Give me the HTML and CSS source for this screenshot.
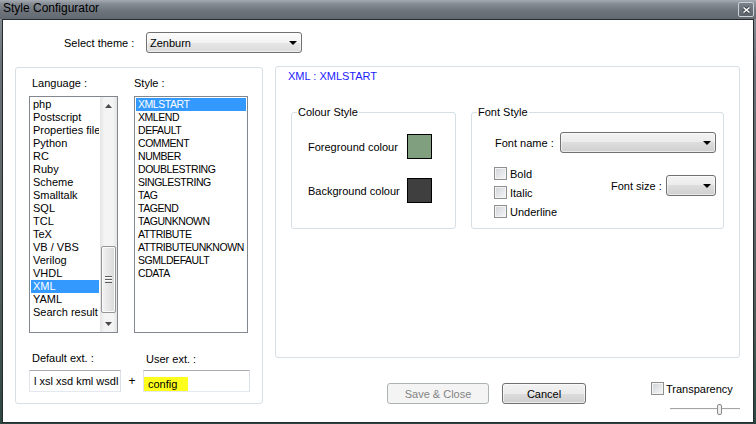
FILE: index.html
```html
<!DOCTYPE html>
<html lang="en">
<head>
  <meta charset="UTF-8">
  <meta name="viewport" content="width=device-width, initial-scale=1.0">
  <title>Style Configurator</title>
  <link rel="stylesheet" href="styles.css">
</head>
<body>
  <div class="window">
    <div class="titlebar">
      <span class="title">Style Configurator</span>
      <span class="close-btn">
        <svg width="9" height="8" viewBox="0 0 9 8"><path d="M1.5 1.5l6 5M7.5 1.5l-6 5" stroke="#3a3f45" stroke-width="3.2"/><path d="M1.5 1.5l6 5M7.5 1.5l-6 5" stroke="#fff" stroke-width="1.6"/></svg>
      </span>
    </div>

    <div class="client">
      <div class="theme-row">
        <span class="theme-label">Select theme :</span>
        <div class="combo combo-theme"><span class="combo-text">Zenburn</span><i class="arrow"></i></div>
      </div>

      <div class="main">
        <div class="panel left-panel">
          <div class="list-labels">
            <span class="lbl-lang">Language :</span>
            <span class="lbl-style">Style :</span>
          </div>
          <div class="lists">
            <div class="listbox lang-list">
              <ul class="items">
                <li>php</li>
                <li>Postscript</li>
                <li>Properties file</li>
                <li>Python</li>
                <li>RC</li>
                <li>Ruby</li>
                <li>Scheme</li>
                <li>Smalltalk</li>
                <li>SQL</li>
                <li>TCL</li>
                <li>TeX</li>
                <li>VB / VBS</li>
                <li>Verilog</li>
                <li>VHDL</li>
                <li class="selected">XML</li>
                <li>YAML</li>
                <li>Search result</li>
              </ul>
              <div class="scrollbar">
                <div class="sb-btn"><svg width="7" height="4" viewBox="0 0 7 4"><polygon points="0,4 7,4 3.5,0" fill="#4b4b4b"/></svg></div>
                <div class="sb-track"><div class="sb-thumb"><span class="grip"></span></div></div>
                <div class="sb-btn"><svg width="7" height="4" viewBox="0 0 7 4"><polygon points="0,0 7,0 3.5,4" fill="#4b4b4b"/></svg></div>
              </div>
            </div>
            <div class="listbox style-list">
              <ul class="items">
                <li class="selected">XMLSTART</li>
                <li>XMLEND</li>
                <li>DEFAULT</li>
                <li>COMMENT</li>
                <li>NUMBER</li>
                <li>DOUBLESTRING</li>
                <li>SINGLESTRING</li>
                <li>TAG</li>
                <li>TAGEND</li>
                <li>TAGUNKNOWN</li>
                <li>ATTRIBUTE</li>
                <li>ATTRIBUTEUNKNOWN</li>
                <li>SGMLDEFAULT</li>
                <li>CDATA</li>
              </ul>
            </div>
          </div>
          <div class="ext-row">
            <div class="ext-col default-col">
              <span class="ext-label">Default ext. :</span>
              <div class="field">l xsl xsd kml wsdl</div>
            </div>
            <span class="plus">+</span>
            <div class="ext-col user-col">
              <span class="ext-label">User ext. :</span>
              <div class="field"><span class="mark">config</span></div>
            </div>
          </div>
        </div>

        <div class="right-col">
          <div class="panel right-panel">
            <div class="style-title">XML : XMLSTART</div>
            <div class="groups">
              <fieldset class="group colour-group">
                <legend>Colour Style</legend>
                <div class="group-body">
                  <div class="colour-row">
                    <span class="colour-label">Foreground colour</span>
                    <span class="swatch fg"></span>
                  </div>
                  <div class="colour-row">
                    <span class="colour-label">Background colour</span>
                    <span class="swatch bg"></span>
                  </div>
                </div>
              </fieldset>
              <fieldset class="group font-group">
                <legend>Font Style</legend>
                <div class="group-body">
                  <div class="font-name-row">
                    <span class="font-label">Font name :</span>
                    <div class="combo combo-font"><i class="arrow"></i></div>
                  </div>
                  <div class="font-opts">
                    <div class="checks">
                      <div class="check-row"><span class="check"></span>Bold</div>
                      <div class="check-row"><span class="check"></span>Italic</div>
                      <div class="check-row"><span class="check"></span>Underline</div>
                    </div>
                    <div class="size-row">
                      <span class="size-label">Font size :</span>
                      <div class="combo combo-size"><i class="arrow"></i></div>
                    </div>
                  </div>
                </div>
              </fieldset>
            </div>
          </div>

          <div class="bottom-row">
            <div class="buttons">
              <button class="btn btn-save" disabled>Save &amp; Close</button>
              <button class="btn btn-cancel">Cancel</button>
            </div>
            <div class="transparency">
              <div class="check-row"><span class="check"></span>Transparency</div>
              <div class="slider"><span class="thumb"></span></div>
            </div>
          </div>
        </div>
      </div>
    </div>
  </div>
</body>
</html>
```

FILE: styles.css
```css
* {
  box-sizing: border-box;
}
body {
  margin: 0;
  font-family: "Liberation Sans", Arial, sans-serif;
  font-size: 11px;
  color: #000;
}
.window {
  width: 756px;
  height: 424px;
  padding: 0 2px 1px 2px;
  display: flex;
  flex-direction: column;
  background: linear-gradient(#8d939a, #6b7279 15%, #4f5c58 70%, #2c463f);
}
.titlebar {
  margin: 0 -2px;
  height: 19px;
  padding: 0 2px 0 3px;
  display: flex;
  align-items: flex-start;
  background: linear-gradient(#a6abb2 0, #868c94 20%, #6d737b 60%, #636971 100%);
}
.title {
  font-size: 12px;
  line-height: 17px;
  color: #000;
}
.close-btn {
  margin-left: auto;
  margin-top: 2px;
  width: 16px;
  height: 15px;
  border: 1px solid #cdd0d4;
  border-radius: 2px;
  background: linear-gradient(#7b8189, #5c626a);
  display: flex;
  align-items: center;
  justify-content: center;
}

.client {
  flex: 1;
  background: #fff;
  border: 1px solid #262b30;
  padding: 12px 0 0 12px;
}

/* theme selector */
.theme-row {
  display: flex;
  align-items: center;
  padding-left: 49px;
}
.theme-label {
  width: 82px;
}
.combo {
  height: 21px;
  border: 1px solid #707070;
  border-radius: 3px;
  background: linear-gradient(#f3f3f3 0%, #ebebeb 50%, #dddddd 50%, #cfcfcf 100%);
  box-shadow: inset 0 0 0 1px rgba(255, 255, 255, 0.55);
  display: flex;
  align-items: center;
  padding: 0 4px 0 3px;
}
.combo-text {
  flex: 1;
}
.arrow {
  margin-left: auto;
  width: 0;
  height: 0;
  border-left: 4px solid transparent;
  border-right: 4px solid transparent;
  border-top: 4px solid #000;
}
.combo-theme {
  width: 156px;
  background: linear-gradient(#fbfbfb 0%, #f3f3f3 50%, #e6e6e6 50%, #dcdcdc 100%);
}

.main {
  display: flex;
  align-items: flex-start;
  margin-top: 13px;
}
.panel {
  border: 1px solid #d5dfe5;
  border-radius: 3px;
}

/* left panel */
.left-panel {
  margin-top: 1px;
  width: 248px;
  height: 337px;
}
.list-labels {
  display: flex;
  padding-top: 9px;
  line-height: 13px;
}
.lbl-lang {
  margin-left: 16px;
  width: 102px;
}
.lists {
  display: flex;
  margin-top: 6px;
  padding-left: 13px;
}
.listbox {
  height: 237px;
  border: 1px solid #828790;
  display: flex;
  overflow: hidden;
}
.lang-list {
  width: 89px;
}
.style-list {
  width: 114px;
  margin-left: 16px;
}
.items {
  list-style: none;
  margin: 0;
  padding: 1px;
  flex: 1;
  min-width: 0;
}
.items li {
  height: 13px;
  line-height: 13px;
  padding-left: 1px;
  white-space: nowrap;
  overflow: hidden;
}
.lang-list .items li {
  padding-left: 2px;
}
.style-list .items li {
  font-size: 10.5px;
  letter-spacing: -0.45px;
  padding-left: 2px;
}
.items li.selected {
  background: #3399ff;
  color: #fff;
}
.scrollbar {
  width: 17px;
  display: flex;
  flex-direction: column;
  background: linear-gradient(90deg, #e4e4e4, #f4f4f4 25%, #f4f4f4 75%, #e4e4e4);
}
.sb-btn {
  height: 17px;
  display: flex;
  align-items: center;
  justify-content: center;
}
.sb-track {
  flex: 1;
  padding: 0 1px;
}
.sb-thumb {
  margin-top: 132px;
  height: 67px;
  border: 1px solid #959595;
  border-radius: 2px;
  background: linear-gradient(90deg, #f3f3f3, #e6e6e6 50%, #d9d9d9);
  box-shadow: inset 0 0 0 1px #fafafa;
  display: flex;
  align-items: center;
  justify-content: center;
}
.grip {
  width: 7px;
  height: 7px;
  background: repeating-linear-gradient(#5f5f5f 0, #5f5f5f 1px, #fff 1px, #fff 2px, transparent 2px, transparent 3px);
}

.ext-row {
  display: flex;
  align-items: flex-end;
  margin-top: 19px;
  padding-left: 13px;
}
.ext-col {
  display: flex;
  flex-direction: column;
}
.ext-label {
  line-height: 13px;
  margin-left: 3px;
  margin-bottom: 5px;
}
.user-col .ext-label {
  margin-bottom: 4px;
}
.default-col {
  width: 92px;
}
.user-col {
  width: 107px;
}
.plus {
  width: 22px;
  height: 22px;
  line-height: 22px;
  text-align: center;
  font-size: 12px;
}
.field {
  height: 22px;
  border: 1px solid;
  border-color: #abadb3 #dbdfe6 #e3e9ef #e2e3ea;
  padding: 0 4px;
  line-height: 20px;
  white-space: nowrap;
  overflow: hidden;
}
.user-col .field {
  padding: 3px 0 0 0;
}
.mark {
  display: inline-block;
  height: 14px;
  line-height: 14px;
  padding: 0 11px 0 4px;
  background: #ffff1e;
}

/* right column */
.right-col {
  margin-left: 12px;
  width: 465px;
}
.right-panel {
  height: 292px;
}
.style-title {
  margin-top: 3px;
  padding-left: 12px;
  line-height: 13px;
  color: #2121ff;
}
.groups {
  display: flex;
  gap: 15px;
  margin-top: 23px;
  padding-left: 15px;
}
.group {
  margin: 0;
  padding: 0;
  border: 1px solid #d5dfe5;
  border-radius: 3px;
  height: 123px;
  min-width: 0;
}
.group legend {
  margin-left: 5px;
  padding: 0 1px;
  line-height: 13px;
}
.colour-group {
  width: 165px;
}
.colour-group .group-body {
  padding: 15px 0 0 16px;
}
.colour-row {
  display: flex;
  align-items: center;
  height: 25px;
  margin-bottom: 19px;
}
.colour-label {
  width: 99px;
}
.swatch {
  width: 25px;
  height: 25px;
  border: 1px solid #000;
}
.swatch.fg {
  background: #7f9f7f;
}
.swatch.bg {
  background: #3f3f3f;
}

.font-group {
  width: 253px;
}
.font-group .group-body {
  padding: 13px 7px 0 22px;
}
.font-name-row {
  display: flex;
  align-items: center;
}
.font-label {
  margin-left: 1px;
  width: 65px;
}
.combo-font {
  flex: 1;
}
.font-opts {
  display: flex;
  margin-top: 14px;
}
.check-row {
  display: flex;
  align-items: center;
  height: 13px;
  margin-bottom: 6px;
}
.check {
  width: 13px;
  height: 13px;
  margin-right: 3px;
  border: 1px solid #8f8f8f;
  background: linear-gradient(135deg, #cfd2d7, #f7f7f7);
  box-shadow: inset 0 0 0 1px #f4f4f4;
}
.size-row {
  margin-left: auto;
  margin-top: 8px;
  display: flex;
  align-items: center;
  align-self: flex-start;
}
.size-label {
  width: 55px;
}
.combo-size {
  width: 50px;
}

/* bottom buttons */
.bottom-row {
  display: flex;
  align-items: flex-start;
  margin-top: 24px;
}
.buttons {
  display: flex;
  gap: 13px;
  margin-top: 1px;
  margin-left: 112px;
}
.btn {
  height: 21px;
  font-family: "Liberation Sans", Arial, sans-serif;
  font-size: 11px;
  color: #000;
  border: 1px solid #707070;
  border-radius: 3px;
  background: linear-gradient(#f2f2f2 0%, #ebebeb 50%, #dddddd 50%, #cfcfcf 100%);
  box-shadow: inset 0 0 0 1px rgba(255, 255, 255, 0.6);
  padding: 0;
}
.btn-save {
  width: 102px;
}
.btn-cancel {
  width: 84px;
}
.btn:disabled {
  color: #838383;
  border-color: #adb2b5;
  background: #f4f4f4;
  box-shadow: none;
}
.transparency {
  margin-left: auto;
  width: 89px;
}
.transparency .check-row {
  margin-bottom: 0;
}
.transparency .check {
  margin-right: 2px;
}
.slider {
  margin: 9px 0 0 19px;
  height: 11px;
  display: flex;
  background: linear-gradient(transparent 4px, #a5a5a5 4px, #a5a5a5 5px, #f6f6f6 5px, #f6f6f6 6px, transparent 6px);
}
.thumb {
  margin-left: 47px;
  width: 5px;
  height: 11px;
  border: 1px solid #8a8a8a;
  border-radius: 2px;
  background: #efefef;
}
```
